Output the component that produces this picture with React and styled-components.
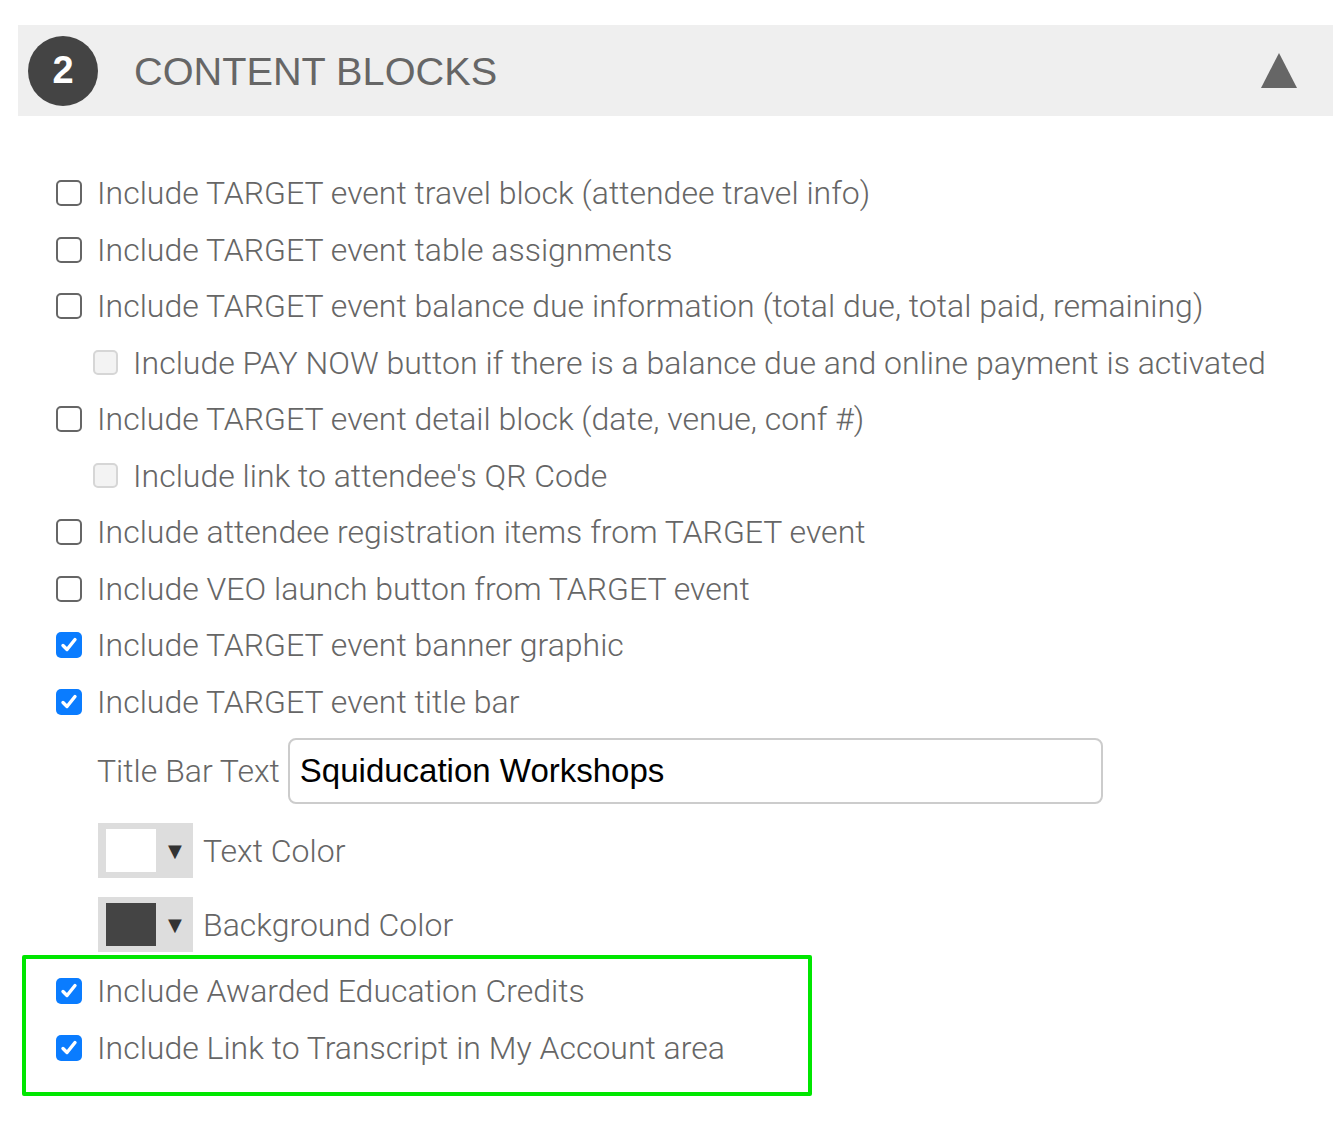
import React from 'react';
import styled, { createGlobalStyle } from 'styled-components';

const GlobalStyle = createGlobalStyle`
  body {
    margin: 0;
    background: #fff;
    font-family: Roboto, "Liberation Sans", sans-serif;
  }
`;

const rows = [
  { label: 'Include TARGET event travel block (attendee travel info)' },
  { label: 'Include TARGET event table assignments' },
  { label: 'Include TARGET event balance due information (total due, total paid, remaining)' },
  { label: 'Include PAY NOW button if there is a balance due and online payment is activated', sub: true },
  { label: 'Include TARGET event detail block (date, venue, conf #)' },
  { label: "Include link to attendee's QR Code", sub: true },
  { label: 'Include attendee registration items from TARGET event' },
  { label: 'Include VEO launch button from TARGET event' },
  { label: 'Include TARGET event banner graphic', checked: true },
  { label: 'Include TARGET event title bar', checked: true },
];

const Check = ({ checked, sub }) => (
  <StyledBox $checked={checked} $sub={sub}>
    {checked && (
      <svg width="20" height="20" viewBox="0 0 20 20">
        <path
          d="M4 10.5 L8 14.5 L16 4.5"
          fill="none"
          stroke="#fff"
          strokeWidth="3.4"
          strokeLinecap="round"
          strokeLinejoin="round"
        />
      </svg>
    )}
  </StyledBox>
);

const ColorPicker = ({ swatch, label }) => (
  <StyledColorRow>
    <StyledPicker>
      <StyledSwatch $color={swatch} />
      <StyledArrow>▼</StyledArrow>
    </StyledPicker>
    <StyledLabel>{label}</StyledLabel>
  </StyledColorRow>
);

const App = () => {
  return (
    <>
      <GlobalStyle />
      <StyledPage>
        <StyledHeader>
          <StyledStep>2</StyledStep>
          <StyledTitle>CONTENT BLOCKS</StyledTitle>
          <svg width="36" height="36" viewBox="0 0 36 36">
            <polygon points="18,0 36,35 0,35" fill="#666" />
          </svg>
        </StyledHeader>

        <StyledList>
          {rows.map((row) => (
            <StyledRow key={row.label} $sub={row.sub}>
              <Check checked={row.checked} sub={row.sub} />
              <StyledLabel>{row.label}</StyledLabel>
            </StyledRow>
          ))}

          <StyledTitleRow>
            <StyledLabel>Title Bar Text</StyledLabel>
            <StyledInput defaultValue="Squiducation Workshops" />
          </StyledTitleRow>

          <ColorPicker swatch="#fff" label="Text Color" />
          <ColorPicker swatch="#444" label="Background Color" />

          <StyledHighlight>
            <StyledRow $inBox>
              <Check checked />
              <StyledLabel>Include Awarded Education Credits</StyledLabel>
            </StyledRow>
            <StyledRow $inBox>
              <Check checked />
              <StyledLabel>Include Link to Transcript in My Account area</StyledLabel>
            </StyledRow>
          </StyledHighlight>
        </StyledList>
      </StyledPage>
    </>
  );
};

const StyledPage = styled.div`
  padding: 25px 5px 30px 18px;
`;

const StyledHeader = styled.div`
  height: 91px;
  background: #efefef;
  display: flex;
  align-items: center;
  padding: 0 36px 0 10px;
`;

const StyledStep = styled.div`
  width: 70px;
  height: 70px;
  border-radius: 50%;
  background: #444;
  color: #fff;
  font-family: "Liberation Sans", Arial, sans-serif;
  font-weight: 700;
  font-size: 38px;
  display: flex;
  align-items: center;
  justify-content: center;
`;

const StyledTitle = styled.h2`
  flex: 1;
  margin: 2px 0 0 36px;
  font-family: "Liberation Sans", Arial, sans-serif;
  font-weight: 400;
  font-size: 39.7px;
  color: #666;
`;

const StyledList = styled.div`
  margin-top: 49px;
  padding-left: 4px;
`;

const StyledRow = styled.div`
  height: 56.5px;
  display: flex;
  align-items: center;
  gap: 15px;
  padding-left: ${(p) => (p.$inBox ? '30px' : p.$sub ? '71px' : '34px')};
`;

const StyledBox = styled.span`
  flex: none;
  box-sizing: border-box;
  width: ${(p) => (p.$sub ? '25px' : '26px')};
  height: ${(p) => (p.$sub ? '25px' : '26px')};
  border-radius: 5px;
  border: ${(p) =>
    p.$checked ? 'none' : p.$sub ? '2px solid #d6d6d6' : '2px solid #666'};
  background: ${(p) => (p.$checked ? '#0a7cff' : p.$sub ? '#f3f3f3' : '#fff')};
  display: flex;
  align-items: center;
  justify-content: center;
`;

const StyledLabel = styled.span`
  font-family: Roboto, "Liberation Sans", sans-serif;
  font-weight: 300;
  font-size: 32px;
  color: #666;
  white-space: nowrap;
`;

const StyledTitleRow = styled.div`
  margin-top: 8px;
  display: flex;
  align-items: center;
  gap: 8px;
  padding-left: 75px;
`;

const StyledInput = styled.input`
  box-sizing: border-box;
  width: 815px;
  height: 66px;
  border: 2px solid #ccc;
  border-radius: 8px;
  padding: 0 10px;
  font-family: "Liberation Sans", Arial, sans-serif;
  font-size: 33px;
  color: #000;
  outline: none;
`;

const StyledColorRow = styled.div`
  margin-top: 19px;
  display: flex;
  align-items: center;
  gap: 10px;
  padding-left: 76px;
`;

const StyledPicker = styled.div`
  width: 95px;
  height: 55px;
  background: #ddd;
  display: flex;
  align-items: center;
  padding-left: 8px;
  box-sizing: border-box;
`;

const StyledSwatch = styled.div`
  width: 50px;
  height: 43px;
  background: ${(p) => p.$color};
`;

const StyledArrow = styled.span`
  margin-left: 12px;
  font-family: "DejaVu Sans", sans-serif;
  font-size: 18px;
  color: #333;
`;

const StyledHighlight = styled.div`
  margin-top: 3px;
  width: 790px;
  box-sizing: border-box;
  border: 4px solid #00e600;
  border-radius: 2px;
  padding: 4px 0 16px;
`;

export default App;
